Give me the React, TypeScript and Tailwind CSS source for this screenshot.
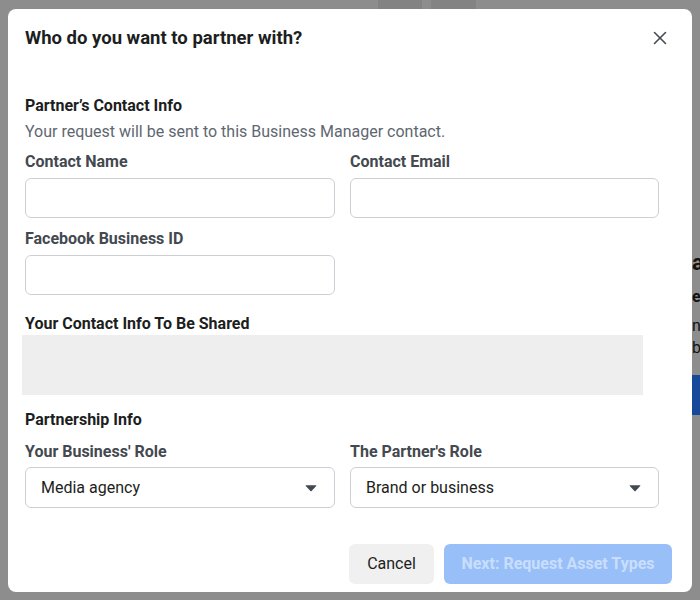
import { X } from 'lucide-react';

const font = { fontFamily: 'Roboto, "Noto Sans", sans-serif' };

function TextField() {
  return <div className="h-[40px] rounded-[6px] border border-[#ccd0d5] bg-white" />;
}

function SelectField({ value }: { value: string }) {
  return (
    <div className="flex h-[41px] items-center justify-between rounded-[6px] border border-[#ccd0d5] bg-white pl-[15px] pr-[17px]">
      <span className="text-[16px] text-[#1c1e21]">{value}</span>
      <svg width="12" height="8" viewBox="0 0 12 8" className="text-[#444950]">
        <path d="M1 1.2 H11 Q11.8 1.2 11.2 2 L6.6 7 Q6 7.6 5.4 7 L0.8 2 Q0.2 1.2 1 1.2 Z" fill="currentColor" />
      </svg>
    </div>
  );
}

function Label({ children }: { children: string }) {
  return <div className="text-[16px] font-bold leading-[20px] text-[#444950]">{children}</div>;
}

export default function App() {
  return (
    <div className="relative h-[600px] w-[700px] overflow-hidden bg-[#8d8d8d]" style={font}>
      {/* page behind the overlay */}
      <div className="flex h-[9px] gap-[9px] pl-[378px]">
        <div className="w-[44px] bg-[#838383]" />
        <div className="w-[45px] bg-[#838383]" />
      </div>
      <div className="ml-[692px] flex w-[8px] flex-col overflow-hidden pt-[240px] text-[#111]">
        <span className="text-[22px] font-bold leading-[28px]">a</span>
        <span className="mt-[10px] text-[16px] font-bold leading-[20px]">e</span>
        <span className="mt-[8px] text-[16px] leading-[22px]">n</span>
        <span className="text-[16px] leading-[22px]">b</span>
        <div className="mt-[16px] h-[40px] w-[20px] bg-[#17499a]" />
      </div>

      {/* modal */}
      <div className="absolute left-[8px] top-[9px] w-[684px] rounded-[8px] bg-white pb-[8px]">
        <div className="flex items-center justify-between pl-[17px] pr-[21px] pt-[17px]">
          <h1 className="text-[18.5px] font-bold leading-[24px] text-[#1c1e21]">Who do you want to partner with?</h1>
          <X size={22} strokeWidth={1.7} className="text-[#444950]" />
        </div>

        <div className="mt-[46px] pl-[17px] pr-[33px]">
          <div className="text-[16px] font-bold leading-[20px] text-[#1c1e21]">Partner’s Contact Info</div>
          <div className="mt-[6px] text-[16px] leading-[20px] text-[#606770]">
            Your request will be sent to this Business Manager contact.
          </div>

          <div className="mt-[10px] grid grid-cols-[310px_309px] gap-x-[15px]">
            <div>
              <Label>Contact Name</Label>
              <div className="mt-[6px]">
                <TextField />
              </div>
            </div>
            <div>
              <Label>Contact Email</Label>
              <div className="mt-[6px]">
                <TextField />
              </div>
            </div>
          </div>

          <div className="mt-[11px] w-[310px]">
            <Label>Facebook Business ID</Label>
            <div className="mt-[6px]">
              <TextField />
            </div>
          </div>

          <div className="mt-[19px] text-[16px] font-bold leading-[20px] text-[#1c1e21]">
            Your Contact Info To Be Shared
          </div>
        </div>
        <div className="ml-[14px] mt-[1px] h-[60px] w-[621px] bg-[#eeeeee]" />

        <div className="pl-[17px] pr-[33px]">
          <div className="mt-[15px] text-[16px] font-bold leading-[20px] text-[#1c1e21]">Partnership Info</div>
          <div className="mt-[12px] grid grid-cols-[310px_309px] gap-x-[15px]">
            <div>
              <Label>Your Business' Role</Label>
              <div className="mt-[5px]">
                <SelectField value="Media agency" />
              </div>
            </div>
            <div>
              <Label>The Partner's Role</Label>
              <div className="mt-[5px]">
                <SelectField value="Brand or business" />
              </div>
            </div>
          </div>
        </div>

        <div className="mt-[36px] flex justify-end gap-[10px] pr-[20px]">
          <button className="h-[40px] w-[85px] rounded-[6px] bg-[#f0f0f0] text-[16px] text-[#1c1e21]">Cancel</button>
          <button className="h-[40px] w-[228px] rounded-[6px] bg-[#99bff8] text-[16px] font-bold text-[#c9defc]">
            Next: Request Asset Types
          </button>
        </div>
      </div>
    </div>
  );
}
